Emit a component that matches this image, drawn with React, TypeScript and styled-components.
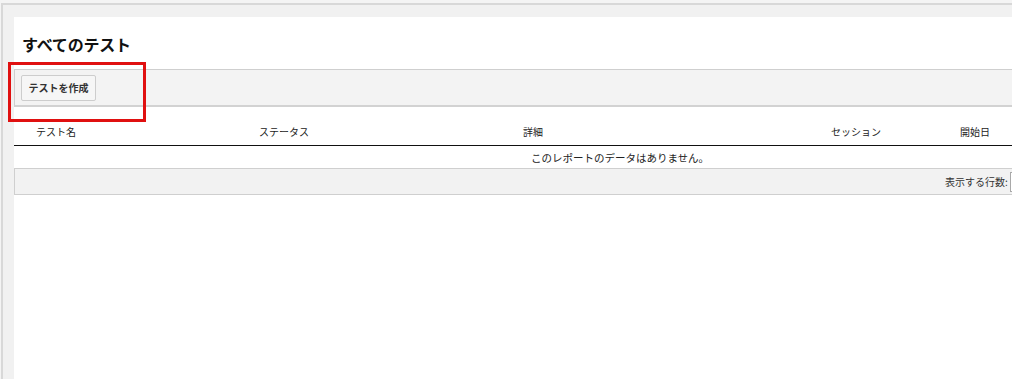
import styled, { createGlobalStyle } from "styled-components";

const GlobalStyle = createGlobalStyle`
  html, body {
    margin: 0;
    padding: 0;
    overflow: hidden;
    background: #ffffff;
  }
  body {
    font-family: "Noto Sans CJK JP", "Noto Sans", "Liberation Sans", sans-serif;
    color: #222;
  }
`;

const columns = [
  { label: "テスト名", width: 223 },
  { label: "ステータス", width: 264 },
  { label: "詳細", width: 308 },
  { label: "セッション", width: 129 },
  { label: "開始日", width: 288 },
];

export default function App() {
  return (
    <>
      <GlobalStyle />
      <Frame>
        <Stage>
          <Panel>
            <TitleBar>
              <Title>すべてのテスト</Title>
            </TitleBar>
            <Toolbar>
              <Button type="button">テストを作成</Button>
            </Toolbar>
            <HeadRow>
              {columns.map((c) => (
                <HeadCell key={c.label} style={{ width: c.width }}>
                  {c.label}
                </HeadCell>
              ))}
            </HeadRow>
            <EmptyRow>このレポートのデータはありません。</EmptyRow>
            <Footer>
              <RowsLabel>表示する行数:</RowsLabel>
              <RowsSelect />
            </Footer>
          </Panel>
          <Highlight />
        </Stage>
      </Frame>
    </>
  );
}

const Frame = styled.div`
  width: 1012px;
  height: 379px;
  box-sizing: border-box;
  padding-top: 3px;
  padding-left: 1px;
  background: #f4f4f4;
  overflow: hidden;
`;

const Stage = styled.div`
  position: relative;
  height: 100%;
  box-sizing: border-box;
  border-top: 2px solid #d8d8d8;
  border-left: 2px solid #d8d8d8;
  background: #f1f1f1;
  padding: 12px 0 0 11px;
  overflow: hidden;
`;

const Panel = styled.div`
  width: 1212px;
  height: 100%;
  background: #ffffff;
  display: flex;
  flex-direction: column;
`;

const TitleBar = styled.div`
  height: 52px;
  display: flex;
  align-items: center;
  padding: 1px 0 0 8px;
  box-sizing: border-box;
`;

const Title = styled.h1`
  margin: 0;
  font-size: 16px;
  font-weight: 700;
  color: #111;
  letter-spacing: -0.2px;
`;

const Toolbar = styled.div`
  height: 38px;
  box-sizing: border-box;
  background: #f3f3f3;
  border-top: 1px solid #cfcfcf;
  border-bottom: 2px solid #d2d2d2;
  border-left: 1px solid #cfcfcf;
  display: flex;
  align-items: center;
  padding: 0 0 0 6px;
`;

const Button = styled.button`
  height: 26px;
  width: 75px;
  padding: 0;
  border: 1px solid #cdcdcd;
  border-radius: 2px;
  background: #f6f6f6;
  font-family: inherit;
  font-size: 10px;
  font-weight: 700;
  color: #333;
`;

const HeadRow = styled.div`
  height: 39px;
  box-sizing: border-box;
  display: flex;
  align-items: flex-end;
  padding-bottom: 6px;
  border-bottom: 1px solid #111;
`;

const HeadCell = styled.div`
  box-sizing: border-box;
  padding-left: 22px;
  font-size: 10px;
  color: #222;
  line-height: 14px;
`;

const EmptyRow = styled.div`
  height: 22px;
  display: flex;
  align-items: center;
  justify-content: center;
  font-size: 10.5px;
  color: #222;
`;

const Footer = styled.div`
  height: 27px;
  box-sizing: border-box;
  background: #f2f2f2;
  border-top: 1px solid #cfcfcf;
  border-bottom: 1px solid #cfcfcf;
  border-left: 1px solid #cfcfcf;
  display: flex;
  align-items: center;
  padding-left: 930px;
`;

const RowsLabel = styled.span`
  font-size: 10px;
  color: #333;
`;

const RowsSelect = styled.div`
  margin-left: 2px;
  width: 40px;
  height: 18px;
  border: 1px solid #a9a9a9;
  background: #fff;
`;

const Highlight = styled.div`
  position: absolute;
  left: 5px;
  top: 57px;
  width: 138px;
  height: 60px;
  box-sizing: border-box;
  border: 3px solid #e01010;
  pointer-events: none;
`;
